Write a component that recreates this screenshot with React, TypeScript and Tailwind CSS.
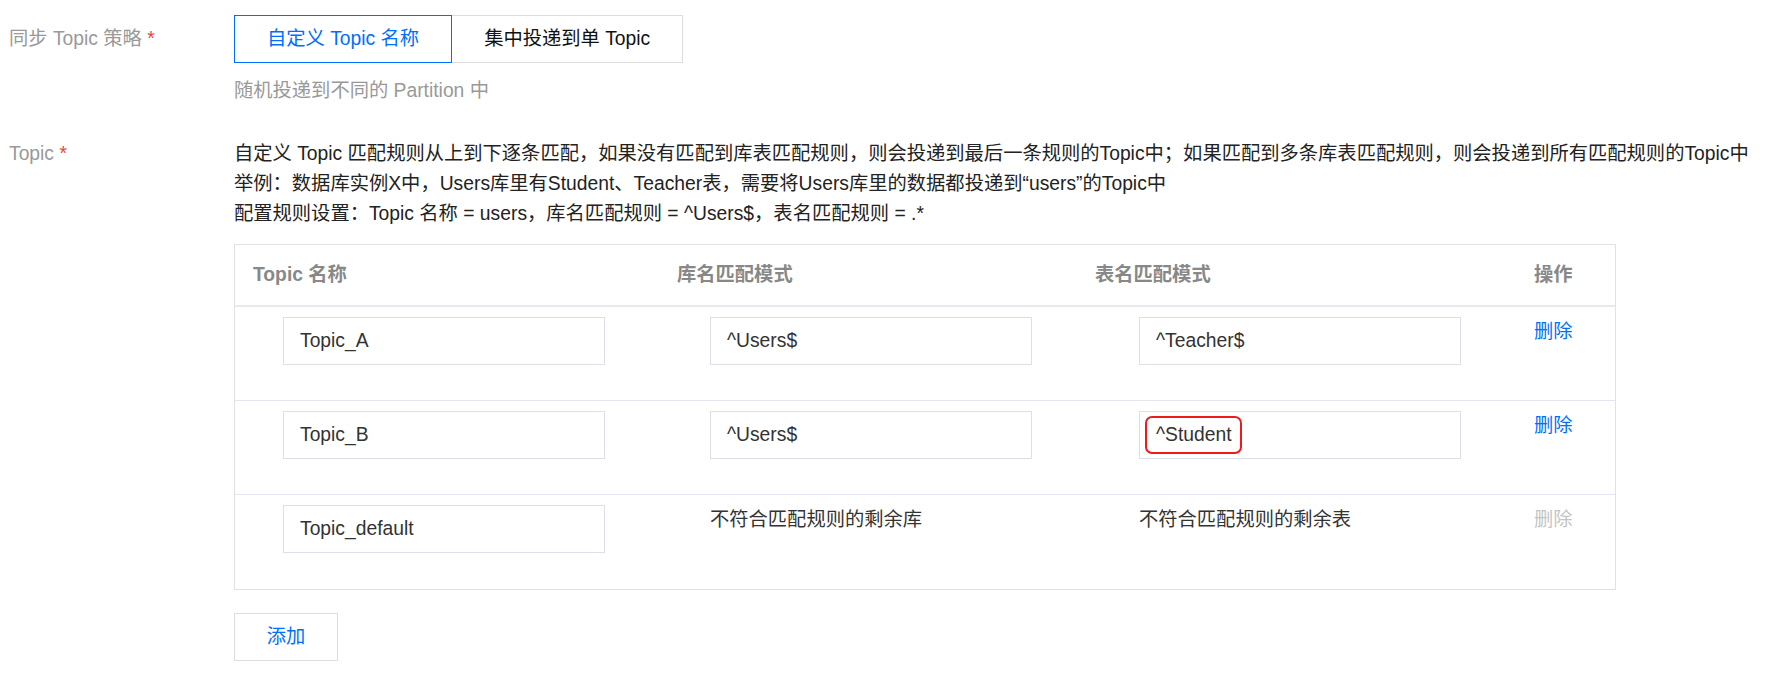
import React from "react";

const FONT = { fontFamily: '"Liberation Sans", "Noto Sans CJK SC", sans-serif' };

const ROWS = [
  { topic: "Topic_A", db: "^Users$", table: "^Teacher$", removable: true },
  { topic: "Topic_B", db: "^Users$", table: "^Student", removable: true, mark: true },
  { topic: "Topic_default", db: null, table: null, removable: false },
];

function Field({ value, mark }: { value: string; mark?: boolean }) {
  return (
    <div className="relative flex h-[48px] w-[322px] items-center border border-[#dcdfe6] bg-white pl-[16px] text-[#333]">
      {value}
      {mark && (
        <span className="absolute left-[5px] top-[4px] h-[38px] w-[97px] rounded-[7px] border-2 border-[#ef1a1a]" />
      )}
    </div>
  );
}

function Label({ text }: { text: string }) {
  return (
    <span className="text-[#999]">
      {text} <span className="text-[#e54545]">*</span>
    </span>
  );
}

export default function App() {
  return (
    <div className="min-h-screen bg-white pl-[9px] pt-[15px] text-[19.3px] leading-[30px]" style={FONT}>
      {/* 同步策略 */}
      <div className="flex">
        <div className="w-[225px] pt-[9px]">
          <Label text="同步 Topic 策略" />
        </div>
        <div>
          <div className="flex h-[48px]">
            <button className="border border-[#006eff] px-[32px] text-[#006eff]">自定义 Topic 名称</button>
            <button className="border border-l-0 border-[#dddddd] px-[32px] text-[#111]">集中投递到单 Topic</button>
          </div>
          <p className="mt-[13px] text-[#999]">随机投递到不同的 Partition 中</p>
        </div>
      </div>

      {/* Topic 规则 */}
      <div className="mt-[33px] flex">
        <div className="w-[225px]">
          <Label text="Topic" />
        </div>
        <div className="w-[1382px]">
          <div className="whitespace-nowrap text-[#222]">
            <p>自定义 Topic 匹配规则从上到下逐条匹配，如果没有匹配到库表匹配规则，则会投递到最后一条规则的Topic中；如果匹配到多条库表匹配规则，则会投递到所有匹配规则的Topic中</p>
            <p>举例：数据库实例X中，Users库里有Student、Teacher表，需要将Users库里的数据都投递到“users”的Topic中</p>
            <p>配置规则设置：Topic 名称 = users，库名匹配规则 = ^Users$，表名匹配规则 = .*</p>
          </div>

          <div className="mt-[15px] border border-[#dfe2e8]">
            <div className="grid h-[62px] grid-cols-[410px_431px_439px_1fr] items-center border-b-2 border-[#e6e9ee] font-bold text-[#888]">
              <div className="pl-[18px]">Topic 名称</div>
              <div className="pl-[32px]">库名匹配模式</div>
              <div className="pl-[19px]">表名匹配模式</div>
              <div className="pl-[19px]">操作</div>
            </div>
            {ROWS.map((r, i) => (
              <div
                key={r.topic}
                className={
                  "grid h-[94px] grid-cols-[410px_431px_439px_1fr] items-start pt-[10px] " +
                  (i < ROWS.length - 1 ? "border-b border-[#e3e6ec]" : "")
                }
              >
                <div className="pl-[48px]">
                  <Field value={r.topic} />
                </div>
                <div className="pl-[65px] text-[#333]">
                  {r.db ? <Field value={r.db} /> : <span>不符合匹配规则的剩余库</span>}
                </div>
                <div className="pl-[63px] text-[#333]">
                  {r.table ? <Field value={r.table} mark={r.mark} /> : <span>不符合匹配规则的剩余表</span>}
                </div>
                <div className="pl-[19px]">
                  <span className={r.removable ? "cursor-pointer text-[#006eff]" : "text-[#c4c4c4]"}>删除</span>
                </div>
              </div>
            ))}
          </div>

          <button className="mt-[23px] h-[48px] w-[104px] border border-[#dddddd] text-[#006eff]">添加</button>
        </div>
      </div>
    </div>
  );
}
